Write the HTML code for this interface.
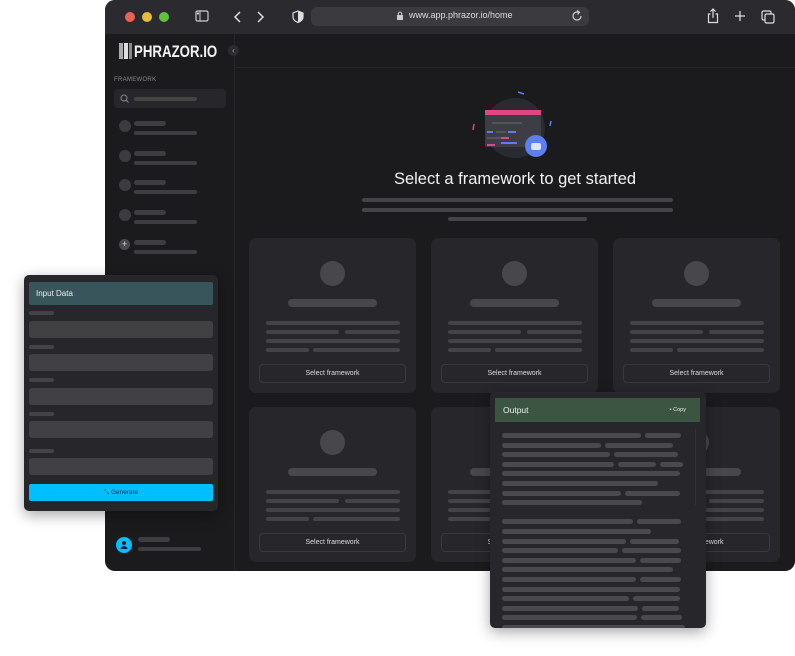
<!DOCTYPE html>
<html><head><meta charset="utf-8"><style>
*{margin:0;padding:0;box-sizing:border-box}
body{width:795px;height:656px;background:#fff;position:relative;overflow:hidden;font-family:"Liberation Sans",sans-serif}
.a{position:absolute}
.win{left:105px;top:0;width:690px;height:571px;background:#1b1b1e;border-radius:10px;overflow:hidden}
.tb{left:0;top:0;width:690px;height:34px;background:#2b2b2f}
.bar{position:absolute;background:#3e3e42;border-radius:3px}
.card{position:absolute;width:167px;height:155px;background:#27272b;border-radius:7px}
.card .c{left:71px;top:23px;width:25px;height:25px;border-radius:50%;background:#48484c}
.card .t{left:39px;top:61px;width:89px;height:8px;border-radius:4px;background:#48484c}
.card .btn{left:10px;top:126px;width:147px;height:19px;border:1px solid #3a3a3e;border-radius:4px;color:#ddd;font-size:7px;text-align:center;line-height:17px}
.ln{position:absolute;height:4px;border-radius:2px;background:#444448}
.pan{position:absolute;background:#27272b;border-radius:5px;box-shadow:0 4px 14px rgba(0,0,0,.35)}
.ol{position:absolute;height:5px;border-radius:3px;background:#4a4a4e}
</style></head><body>
<div class="a win">
 <div class="a tb">
  <div class="a" style="left:20px;top:12px;width:10px;height:10px;border-radius:50%;background:#ee5f57"></div>
  <div class="a" style="left:37px;top:12px;width:10px;height:10px;border-radius:50%;background:#e6bb3c"></div>
  <div class="a" style="left:54px;top:12px;width:10px;height:10px;border-radius:50%;background:#5fc23f"></div>
  <svg class="a" style="left:90px;top:10px" width="14" height="12"><rect x="1" y="1" width="12" height="10" rx="1.5" fill="none" stroke="#ccc" stroke-width="1.2"/><line x1="5" y1="1" x2="5" y2="11" stroke="#ccc"/><rect x="2" y="2.5" width="2" height="2" fill="#ccc"/></svg>
  <svg class="a" style="left:128px;top:10px" width="40" height="14"><path d="M7 2L2 7L7 12" fill="none" stroke="#ddd" stroke-width="1.5"/><path d="M25 2L30 7L25 12" fill="none" stroke="#ddd" stroke-width="1.5"/></svg>
  <svg class="a" style="left:187px;top:10px" width="12" height="13"><path d="M6 1L11 3V7C11 10 8.5 11.5 6 12.5C3.5 11.5 1 10 1 7V3Z" fill="none" stroke="#ddd" stroke-width="1.2"/><path d="M6 1L11 3V7C11 10 8.5 11.5 6 12.5Z" fill="#ddd"/></svg>
  <div class="a" style="left:206px;top:7px;width:278px;height:19px;background:#3b3b3f;border-radius:6px"></div>
  <svg class="a" style="left:291px;top:11px" width="8" height="10"><rect x="1" y="4" width="6" height="5" fill="#ccc"/><path d="M2.3 4V2.8a1.7 1.7 0 0 1 3.4 0V4" fill="none" stroke="#ccc"/></svg>
  <div class="a" style="left:304px;top:10px;font-size:9px;color:#ddd">www.app.phrazor.io/home</div>
  <svg class="a" style="left:466px;top:10px" width="12" height="12"><path d="M10 6A4 4 0 1 1 7.5 2.3" fill="none" stroke="#ccc" stroke-width="1.2"/><path d="M6 0.5L8.5 2.3L6.5 4.5" fill="none" stroke="#ccc" stroke-width="1.2"/></svg>
  <svg class="a" style="left:601px;top:8px" width="14" height="16"><path d="M4.5 6H2.5V14.5H11.5V6H9.5" fill="none" stroke="#ddd" stroke-width="1.2"/><path d="M7 10V1M4.5 3.5L7 1L9.5 3.5" fill="none" stroke="#ddd" stroke-width="1.2"/></svg>
  <svg class="a" style="left:629px;top:10px" width="12" height="12"><path d="M6 1V11M1 6H11" stroke="#ddd" stroke-width="1.3"/></svg>
  <svg class="a" style="left:656px;top:10px" width="14" height="14"><rect x="1" y="1" width="9" height="9" rx="1.5" fill="none" stroke="#ddd" stroke-width="1.2"/><rect x="4" y="4" width="9" height="9" rx="1.5" fill="#2b2b2f" stroke="#ddd" stroke-width="1.2"/></svg>
 </div>
 <div class="a" style="left:129px;top:34px;width:1px;height:537px;background:#26262a"></div>
 <div class="a" style="left:130px;top:67px;width:560px;height:1px;background:#26262a"></div>
 <div class="a" style="left:14px;top:43px;width:4px;height:16px;background:#aaa"></div>
 <div class="a" style="left:19px;top:43px;width:4px;height:16px;background:#ddd"></div>
 <div class="a" style="left:24px;top:43px;width:3px;height:16px;background:#888"></div>
 <div class="a" style="left:29px;top:42px;font-size:17px;font-weight:bold;color:#f2f2f2;transform:scaleX(0.78);transform-origin:0 0;white-space:nowrap">PHRAZOR.IO</div>
 <div class="a" style="left:123px;top:45px;width:11px;height:11px;border-radius:50%;background:#2c2c30;color:#aaa;font-size:8px;line-height:11px;text-align:center">‹</div>
 <div class="a" style="left:9px;top:77px;font-size:6px;color:#888;letter-spacing:.3px">FRAMEWORK</div>
 <div class="a" style="left:9px;top:89px;width:112px;height:19px;background:#27272b;border-radius:4px"></div>
 <svg class="a" style="left:15px;top:94px" width="9" height="9"><circle cx="4" cy="4" r="3" fill="none" stroke="#888"/><line x1="6" y1="6" x2="8.5" y2="8.5" stroke="#888"/></svg>
 <div class="bar" style="left:29px;top:97px;width:63px;height:4px;background:#444"></div>
 <div class="a" style="left:14px;top:120px;width:12px;height:12px;border-radius:50%;background:#3c3c40"></div>
 <div class="bar" style="left:29px;top:121px;width:32px;height:5px"></div><div class="bar" style="left:29px;top:131px;width:63px;height:4px"></div>
 <div class="a" style="left:14px;top:150px;width:12px;height:12px;border-radius:50%;background:#3c3c40"></div>
 <div class="bar" style="left:29px;top:151px;width:32px;height:5px"></div><div class="bar" style="left:29px;top:161px;width:63px;height:4px"></div>
 <div class="a" style="left:14px;top:179px;width:12px;height:12px;border-radius:50%;background:#3c3c40"></div>
 <div class="bar" style="left:29px;top:180px;width:32px;height:5px"></div><div class="bar" style="left:29px;top:190px;width:63px;height:4px"></div>
 <div class="a" style="left:14px;top:209px;width:12px;height:12px;border-radius:50%;background:#3c3c40"></div>
 <div class="bar" style="left:29px;top:210px;width:32px;height:5px"></div><div class="bar" style="left:29px;top:220px;width:63px;height:4px"></div>
 <div class="a" style="left:14px;top:239px;width:11px;height:11px;border-radius:50%;background:#4a4a4e;color:#ddd;font-size:9px;line-height:11px;text-align:center">+</div>
 <div class="bar" style="left:29px;top:240px;width:32px;height:5px"></div><div class="bar" style="left:29px;top:250px;width:63px;height:4px"></div>
 <div class="a" style="left:11px;top:537px;width:16px;height:16px;border-radius:50%;background:#00bfff"></div>
 <svg class="a" style="left:15px;top:540px" width="8" height="9"><circle cx="4" cy="3" r="2" fill="#123"/><path d="M0.5 9a3.5 3 0 0 1 7 0Z" fill="#123"/></svg>
 <div class="bar" style="left:33px;top:537px;width:32px;height:5px"></div><div class="bar" style="left:33px;top:547px;width:63px;height:4px"></div>
 <svg class="a" style="left:365px;top:88px" width="90" height="75">
  <circle cx="45" cy="40" r="30" fill="#2a2b31"/>
  <rect x="15" y="22" width="56" height="37" rx="2" fill="#3c3d45"/>
  <rect x="15" y="22" width="56" height="5" fill="#e0467f"/>
  <rect x="22" y="34" width="30" height="2" fill="#555"/>
  <rect x="17" y="43" width="6" height="2" fill="#5f7ee8"/><rect x="26" y="43" width="10" height="2" fill="#555"/><rect x="38" y="43" width="8" height="2" fill="#5f7ee8"/>
  <rect x="17" y="49" width="14" height="2" fill="#555"/><rect x="31" y="49" width="8" height="2" fill="#e0467f"/>
  <rect x="17" y="56" width="8" height="2" fill="#e0467f"/><rect x="31" y="54" width="16" height="2" fill="#5f7ee8"/>
  <circle cx="66" cy="58" r="11" fill="#5b7ff0"/>
  <rect x="61" y="55" width="10" height="7" rx="2" fill="#dde4ff"/>
  <path d="M4 36L3 42" stroke="#e0467f" stroke-width="1.5"/>
  <path d="M81 33L80 38" stroke="#5f7ee8" stroke-width="1.5"/>
  <path d="M48 4L54 6" stroke="#5f7ee8" stroke-width="1.5"/>
 </svg>
 <div class="a" style="left:130px;top:170px;width:560px;text-align:center;font-size:16.5px;color:#f2f2f2">Select a framework to get started</div>
 <div class="bar" style="left:257px;top:198px;width:311px;height:4px;background:#444448"></div>
 <div class="bar" style="left:257px;top:208px;width:311px;height:4px;background:#444448"></div>
 <div class="bar" style="left:343px;top:217px;width:139px;height:4px;background:#444448"></div>
</div>
<div id="cards"></div>
<script>
var xs=[249,431,613],ys=[238,407],h='';
xs.forEach(function(x){ys.forEach(function(y){
h+='<div class="card" style="left:'+x+'px;top:'+y+'px"><div class="a c"></div><div class="a t"></div>'+
'<div class="ln" style="left:17px;top:83px;width:134px"></div>'+
'<div class="ln" style="left:17px;top:92px;width:73px"></div><div class="ln" style="left:96px;top:92px;width:55px"></div>'+
'<div class="ln" style="left:17px;top:101px;width:134px"></div>'+
'<div class="ln" style="left:17px;top:110px;width:43px"></div><div class="ln" style="left:64px;top:110px;width:87px"></div>'+
'<div class="a btn">Select framework</div></div>';});});
document.getElementById('cards').innerHTML=h;
</script>
<div class="pan" style="left:24px;top:275px;width:194px;height:236px">
 <div class="a" style="left:5px;top:7px;width:184px;height:23px;background:#38555b;border-radius:2px;color:#eee;font-size:8px;line-height:23px;padding-left:7px">Input Data</div>
 <div class="ln" style="left:5px;top:36px;width:25px"></div><div class="a" style="left:5px;top:46px;width:184px;height:17px;background:#414143;border-radius:3px"></div>
 <div class="ln" style="left:5px;top:70px;width:25px"></div><div class="a" style="left:5px;top:79px;width:184px;height:17px;background:#414143;border-radius:3px"></div>
 <div class="ln" style="left:5px;top:103px;width:25px"></div><div class="a" style="left:5px;top:113px;width:184px;height:17px;background:#414143;border-radius:3px"></div>
 <div class="ln" style="left:5px;top:137px;width:25px"></div><div class="a" style="left:5px;top:146px;width:184px;height:17px;background:#414143;border-radius:3px"></div>
 <div class="ln" style="left:5px;top:174px;width:25px"></div><div class="a" style="left:5px;top:183px;width:184px;height:17px;background:#414143;border-radius:3px"></div>
 <div class="a" style="left:5px;top:209px;width:184px;height:17px;background:#00bfff;border-radius:2px;color:#0b2a3a;font-size:6.5px;line-height:17px;text-align:center">⤡ Generate</div>
</div>
<div class="pan" style="left:490px;top:392px;width:216px;height:236px;overflow:hidden">
 <div class="a" style="left:5px;top:6px;width:205px;height:24px;background:#3c5542;color:#eee;font-size:8.5px;line-height:24px;padding-left:8px">Output<span style="position:absolute;right:14px;font-size:5.5px">▪ Copy</span></div>
 <div class="a" style="left:205px;top:38px;width:1px;height:75px;background:#333"></div>
 <div id="ol"></div>
</div>
<script>
var L=[[0,[139,36]],[1,[99,68]],[2,[108,64]],[3,[112,38,23]],[4,[178]],[5,[156]],[6,[119,55]],[7,[140]],
[9,[131,44]],[10,[149]],[11,[124,49]],[12,[116,59]],[13,[134,41]],[14,[171]],[15,[134,41]],[16,[178]],[17,[127,47]],[18,[136,37]],[19,[135,41]],[20,[183]]],o='';
L.forEach(function(r){var x=12,y=41+r[0]*9.6;r[1].forEach(function(w){o+='<div class="ol" style="left:'+x+'px;top:'+y+'px;width:'+w+'px"></div>';x+=w+4;});});
document.getElementById('ol').innerHTML=o;
</script>
</body></html>
